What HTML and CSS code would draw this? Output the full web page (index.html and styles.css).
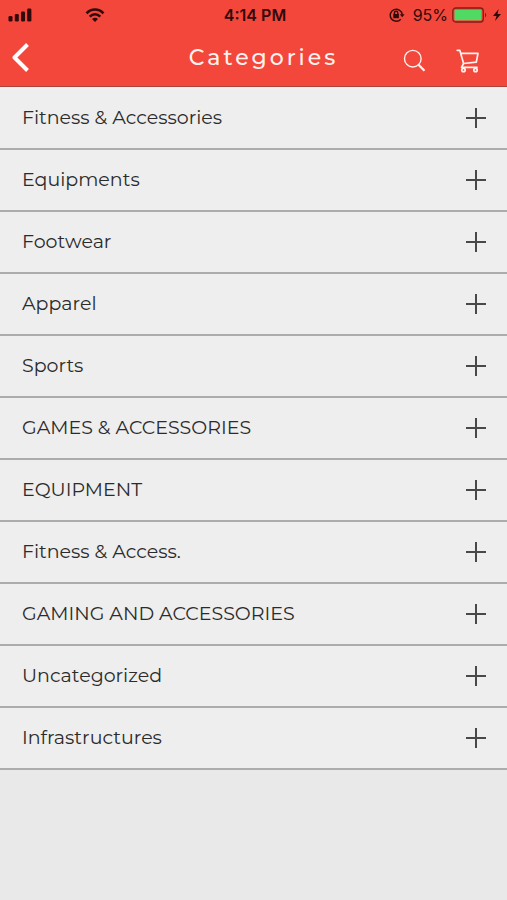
FILE: index.html
```html
<!DOCTYPE html>
<html lang="en">
<head>
<meta charset="utf-8">
<meta name="viewport" content="width=device-width, initial-scale=1">
<title>Categories</title>
<link rel="stylesheet" href="styles.css">
</head>
<body>
<header class="header">
  <div class="status">
    <div class="status-left">
      <svg class="signal" width="24" height="16" viewBox="0 0 24 16" aria-hidden="true"><rect x="0.500" y="9" width="4" height="5.500" rx="1.300"/><rect x="6.800" y="7" width="4" height="7.500" rx="1.300"/><rect x="13" y="4.500" width="4" height="10" rx="1.300"/><rect x="19.200" y="1.500" width="4.200" height="13" rx="1.300"/></svg>
      <svg width="20" height="16" viewBox="0 0 20 16" fill="none" stroke="currentColor" stroke-width="2.600" aria-hidden="true"><path d="M1.500 6.300C6.300 1.300 13.700 1.300 18.500 6.300"/><path d="M4.700 9.600C7.800 6.600 12.200 6.600 15.300 9.600"/><path d="M7 12C8.800 10.300 11.200 10.300 13 12L10 15Z" fill="currentColor" stroke="none"/></svg>
    </div>
    <span class="time">4:14 PM</span>
    <div class="status-right">
      <svg width="16" height="16" viewBox="0 0 16 16" fill="none" stroke="currentColor" stroke-width="1.400" aria-hidden="true"><path d="M11.800 12.200A6 6 0 1 1 13.200 7.500"/><path d="M10.800 7.300H15.600L13.200 10.300Z" fill="currentColor" stroke="none"/><rect x="4.300" y="7" width="5.600" height="4.200" fill="currentColor" stroke="none"/><path d="M5.400 7.300V6A1.700 1.700 0 0 1 8.800 6V7.300"/></svg>
      <span class="percent">95%</span>
      <svg width="36" height="16" viewBox="0 0 36 16" aria-hidden="true"><rect x="0.800" y="1" width="30.500" height="14" rx="3" fill="none" stroke="#861b17" stroke-width="1.300"/><rect x="2.500" y="2.700" width="27" height="10.600" rx="1" fill="#50d963"/><path d="M33 5.500Q35.500 8 33 10.500Z" fill="#861b17"/></svg>
      <svg width="10" height="14" viewBox="0 0 10 14" aria-hidden="true"><path d="M6.700 1L1 8H4.500L3 13L9 6H5.500Z" fill="currentColor"/></svg>
    </div>
  </div>
  <nav class="nav">
    <button class="icon-button back" type="button" aria-label="Back">
      <svg width="18" height="30" viewBox="0 0 18 30" fill="none" stroke="currentColor" stroke-width="4" stroke-linejoin="round"><path d="M15.500 1.500L2.500 14.500L15.500 27.500"/></svg>
    </button>
    <h1 class="title">Categories</h1>
    <div class="actions">
      <button class="icon-button" type="button" aria-label="Search">
        <svg width="24" height="26" viewBox="0 0 24 26" fill="none" stroke="currentColor"><circle cx="10.800" cy="10.700" r="8.300" stroke-width="1.400"/><path d="M16.300 16.500L22.500 22.800" stroke-width="2.300"/></svg>
      </button>
      <button class="icon-button" type="button" aria-label="Cart">
        <svg width="24" height="26" viewBox="0 0 24 26" fill="none" stroke="currentColor" stroke-width="1.700" stroke-linecap="round" stroke-linejoin="round"><path d="M1.200 2.300H3.800L7.600 15.500L5.500 19.400H21"/><path d="M5 5.400H22L20.300 14.200L7.600 15.500"/><circle cx="7.500" cy="22" r="1.700"/><circle cx="19.500" cy="22" r="1.700"/></svg>
      </button>
    </div>
  </nav>
</header>
<main>
  <ul class="list">
    <li><button class="row" type="button">Fitness &amp; Accessories<span class="plus"></span></button></li>
    <li><button class="row" type="button">Equipments<span class="plus"></span></button></li>
    <li><button class="row" type="button">Footwear<span class="plus"></span></button></li>
    <li><button class="row" type="button">Apparel<span class="plus"></span></button></li>
    <li><button class="row" type="button">Sports<span class="plus"></span></button></li>
    <li><button class="row" type="button">GAMES &amp; ACCESSORIES<span class="plus"></span></button></li>
    <li><button class="row" type="button">EQUIPMENT<span class="plus"></span></button></li>
    <li><button class="row" type="button">Fitness &amp; Access.<span class="plus"></span></button></li>
    <li><button class="row" type="button">GAMING AND ACCESSORIES<span class="plus"></span></button></li>
    <li><button class="row" type="button">Uncategorized<span class="plus"></span></button></li>
    <li><button class="row" type="button">Infrastructures<span class="plus"></span></button></li>
  </ul>
</main>
</body>
</html>
```
FILE: styles.css
```css
* {
  box-sizing: border-box;
}

body {
  margin: 0;
  min-height: 100vh;
  background: #e9e9e9;
  color: #2b2b2b;
  font-family: Montserrat, Inter, sans-serif;
}

svg {
  display: block;
}

.header {
  background: #f3473b;
  border-bottom: 1px solid #a8443d;
}

.status {
  display: grid;
  grid-template-columns: 1fr auto 1fr;
  align-items: center;
  height: 29px;
  padding: 0 5px 0 8px;
  color: #300a0a;
  font-family: Inter, sans-serif;
  font-size: 16px;
}

.status-left {
  display: flex;
  align-items: center;
  gap: 53px;
}

.signal {
  fill: currentColor;
}

.time {
  font-weight: 600;
}

.status-right {
  display: flex;
  align-items: center;
  justify-content: flex-end;
  gap: 4px;
}

.percent {
  margin-left: 4px;
}

.nav {
  display: grid;
  grid-template-columns: 1fr auto 1fr;
  align-items: center;
  height: 57px;
  padding: 0 8px 0 28px;
  color: #fff1ee;
}

.icon-button {
  padding: 0;
  border: 0;
  background: none;
  color: inherit;
  cursor: pointer;
}

.back {
  justify-self: start;
  margin-left: -16px;
  color: #fff;
}

.title {
  margin: 0;
  font-size: 22px;
  font-weight: 500;
  letter-spacing: 3px;
}

.actions {
  display: flex;
  justify-content: flex-end;
  gap: 30px;
  padding: 6px 19px 0 0;
}

.list {
  margin: 0;
  padding: 1px 0 0;
  background: #eee;
  list-style: none;
}

.row {
  display: flex;
  align-items: center;
  justify-content: space-between;
  width: 100%;
  height: 62px;
  padding: 0 21px 1px 22px;
  border: 0;
  border-bottom: 2px solid #acacac;
  background: #eee;
  color: inherit;
  font: inherit;
  font-size: 19px;
  text-align: left;
  cursor: pointer;
}

.plus {
  width: 20px;
  height: 20px;
  background:
    linear-gradient(#484848, #484848) center / 20px 2px no-repeat,
    linear-gradient(#484848, #484848) center / 2px 20px no-repeat;
}
```
